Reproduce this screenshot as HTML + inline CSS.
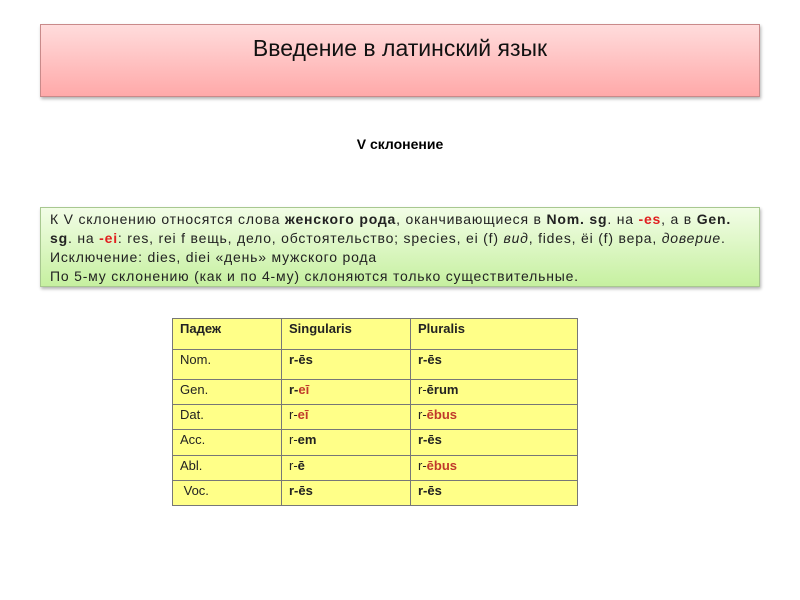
<!DOCTYPE html>
<html><head><meta charset="utf-8"><style>
body{margin:0;width:800px;height:600px;background:#fff;font-family:"Liberation Sans",sans-serif;position:relative;overflow:hidden}
.hdr{position:absolute;left:40px;top:24px;width:720px;height:73px;box-sizing:border-box;border:1px solid #c98a8a;background:linear-gradient(#ffdcdc,#ffa9a9);box-shadow:1px 2px 3px rgba(0,0,0,.3)}
.hdr div{position:absolute;left:0;right:0;top:10px;text-align:center;font-size:23px;color:#111}
.sub{position:absolute;left:0;width:800px;top:136px;text-align:center;font-size:14px;font-weight:bold}
.grn{position:absolute;left:40px;top:207px;width:720px;height:80px;box-sizing:border-box;border:1px solid #a8c890;background:linear-gradient(#f2fde6,#c6f0a0);box-shadow:1px 2px 3px rgba(0,0,0,.3);padding:2px 9px;font-size:14px;line-height:19px;color:#222;letter-spacing:0.8px;white-space:nowrap}
.r{color:#e02020;font-weight:bold}
table{position:absolute;left:172px;top:318px;border-collapse:collapse;background:#ffff88;font-size:13px;color:#222}
td{border:1px solid #777;padding:0 7px;vertical-align:top;height:24px;line-height:20px}
.b{font-weight:bold}.rd{color:#c0392b;font-weight:bold}
</style></head><body>
<div class="hdr"><div>Введение в латинский язык</div></div>
<div class="sub">V склонение</div>
<div class="grn">К V склонению относятся слова <b>женского рода</b>, оканчивающиеся в <b>Nom. sg</b>. на <span class="r">-es</span>, а в <b>Gen.</b><br><b>sg</b>. на <span class="r">-ei</span>: res, rei f вещь, дело, обстоятельство; species, ei (f) <i>вид</i>, fides, ëi (f) вера, <i>доверие</i>.<br>Исключение: dies, diei «день» мужского рода<br>По 5-му склонению (как и по 4-му) склоняются только существительные.</div>
<table>
<tr><td style="width:94px;height:30px" class="b">Падеж</td><td style="width:114px" class="b">Singularis</td><td style="width:152px" class="b">Pluralis</td></tr>
<tr><td style="height:29px">Nom.</td><td class="b">r-ēs</td><td class="b">r-ēs</td></tr>
<tr><td>Gen.</td><td><b>r-</b><span class="rd">eī</span></td><td>r-<b>ērum</b></td></tr>
<tr><td>Dat.</td><td>r-<span class="rd">eī</span></td><td>r-<span class="rd">ēbus</span></td></tr>
<tr><td style="height:25px">Acc.</td><td>r-<b>em</b></td><td class="b">r-ēs</td></tr>
<tr><td>Abl.</td><td>r-<b>ē</b></td><td>r-<span class="rd">ēbus</span></td></tr>
<tr><td>&nbsp;Voc.</td><td class="b">r-ēs</td><td class="b">r-ēs</td></tr>
</table>
</body></html>
